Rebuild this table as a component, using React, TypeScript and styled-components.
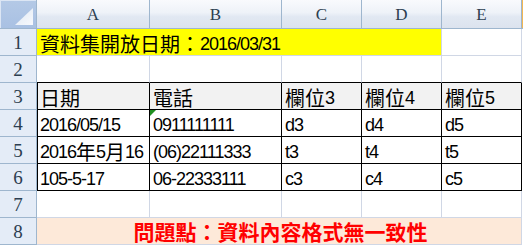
import styled, { createGlobalStyle } from "styled-components";

const GlobalStyle = createGlobalStyle`
  html, body {
    margin: 0;
    padding: 0;
    background: #ffffff;
  }
`;

const GRID = "#d0d7e5";
const HEAD_LINE = "#9eb6ce";

interface RowData {
  cells: string[];
  header?: boolean;
}

const columns = ["A", "B", "C", "D", "E"];

const tableRows: RowData[] = [
  { cells: ["日期", "電話", "欄位3", "欄位4", "欄位5"], header: true },
  { cells: ["2016/05/15", "0911111111", "d3", "d4", "d5"] },
  { cells: ["2016年5月16", "(06)22111333", "t3", "t4", "t5"] },
  { cells: ["105-5-17", "06-22333111", "c3", "c4", "c5"] },
];

const Mixed = ({ text }: { text: string }) => (
  <>
    {text.split(/([\u3000-\u9fff\uff00-\uffef]+)/).map((part, i) =>
      i % 2 === 1 ? <Han key={i}>{part}</Han> : part
    )}
  </>
);

const App = () => {
  return (
    <>
      <GlobalStyle />
      <Sheet>
        <Corner>
          <svg width="36" height="28" viewBox="0 0 36 28">
            <defs>
              <linearGradient id="tri" x1="0" y1="0" x2="1" y2="1">
                <stop offset="0" stopColor="#dfe8f3" />
                <stop offset="1" stopColor="#f7f9fc" />
              </linearGradient>
            </defs>
            <polygon points="33,8 33,25 15,25" fill="url(#tri)" />
          </svg>
        </Corner>
        {columns.map((c) => (
          <ColHeader key={c}>{c}</ColHeader>
        ))}
        <EdgeHeader />

        <RowHeader>1</RowHeader>
        <Cell $span={4} $bg="#ffff00">
          <Mixed text="資料集開放日期：2016/03/31" />
        </Cell>
        <Cell />
        <Edge />

        <RowHeader>2</RowHeader>
        {columns.map((c) => (
          <Cell key={c} $blackBottom />
        ))}
        <Edge />

        {tableRows.map((row, i) => (
          <Row key={i}>
            <RowHeader>{i + 3}</RowHeader>
            {row.cells.map((text, j) => (
              <Cell
                key={j}
                $boxed
                $leftBlack={j === 0}
                $bg={row.header ? "#f2f2f2" : undefined}
              >
                {i === 1 && j === 1 && <ErrorMark />}
                <Mixed text={text} />
              </Cell>
            ))}
            <Edge />
          </Row>
        ))}

        <RowHeader>7</RowHeader>
        {columns.map((c) => (
          <Cell key={c} />
        ))}
        <Edge />

        <RowHeader>8</RowHeader>
        <Cell $span={5} $bg="#fde9d9" $center>
          <Warning>問題點：資料內容格式無一致性</Warning>
        </Cell>
        <Edge />
      </Sheet>
    </>
  );
};

export default App;

const Sheet = styled.div`
  display: grid;
  grid-template-columns: 37px 113px 132px 80px 80px 80px 1px;
  grid-template-rows: 29px repeat(8, 27px);
  width: 523px;
  height: 245px;
`;

const Row = styled.div`
  display: contents;
`;

const Corner = styled.div`
  box-sizing: border-box;
  background: linear-gradient(#b4c9e6, #a9c1e3);
  border-right: 1px solid ${HEAD_LINE};
  border-bottom: 1px solid ${HEAD_LINE};
  box-shadow: inset 1px 1px 0 #dce6f4;
  svg {
    display: block;
  }
`;

const ColHeader = styled.div`
  box-sizing: border-box;
  display: flex;
  align-items: center;
  justify-content: center;
  padding-top: 2px;
  background: linear-gradient(#f9fafd 0%, #eef2f8 45%, #e1e8f2 60%, #dce3ee 100%);
  border-right: 1px solid ${HEAD_LINE};
  border-bottom: 1px solid ${HEAD_LINE};
  font-family: "Liberation Serif", "DejaVu Serif", serif;
  font-size: 17px;
  color: #2c3e50;
`;

const EdgeHeader = styled.div`
  background: #f3b752;
  border-bottom: 1px solid ${HEAD_LINE};
`;

const RowHeader = styled.div`
  box-sizing: border-box;
  display: flex;
  align-items: center;
  justify-content: center;
  padding-top: 1px;
  background: #e4ecf7;
  border-right: 1px solid ${HEAD_LINE};
  border-bottom: 1px solid ${HEAD_LINE};
  font-family: "Liberation Serif", "DejaVu Serif", serif;
  font-size: 19px;
  color: #2c3e50;
`;

const Edge = styled.div`
  background: #ffffff;
`;

const Cell = styled.div<{
  $span?: number;
  $bg?: string;
  $boxed?: boolean;
  $leftBlack?: boolean;
  $blackBottom?: boolean;
  $center?: boolean;
}>`
  position: relative;
  box-sizing: border-box;
  grid-column: span ${(p) => p.$span ?? 1};
  display: flex;
  align-items: flex-end;
  justify-content: ${(p) => (p.$center ? "center" : "flex-start")};
  padding: 0 0 1px 3px;
  background: ${(p) => p.$bg ?? "#ffffff"};
  border-right: 1px solid ${(p) => (p.$boxed ? "#000000" : GRID)};
  border-bottom: 1px solid
    ${(p) => (p.$boxed || p.$blackBottom ? "#000000" : GRID)};
  box-shadow: ${(p) => (p.$leftBlack ? "inset 1px 0 0 #000000" : "none")};
  font-family: "Liberation Sans", "Noto Sans CJK TC", sans-serif;
  font-size: 18px;
  letter-spacing: -1px;
  line-height: 20px;
  color: #000000;
  white-space: nowrap;
`;

const Han = styled.span`
  font-family: "Noto Sans CJK TC", sans-serif;
  font-size: 20px;
  letter-spacing: 0;
`;

const Warning = styled.span`
  display: block;
  margin-bottom: 1px;
  font-family: "Noto Sans CJK TC", sans-serif;
  font-weight: 700;
  font-size: 21px;
  line-height: 22px;
  letter-spacing: 0;
  color: #ff0000;
`;

const ErrorMark = styled.span`
  position: absolute;
  top: 0;
  left: 0;
  width: 0;
  height: 0;
  border-top: 6px solid #1f8f1f;
  border-right: 6px solid transparent;
`;
